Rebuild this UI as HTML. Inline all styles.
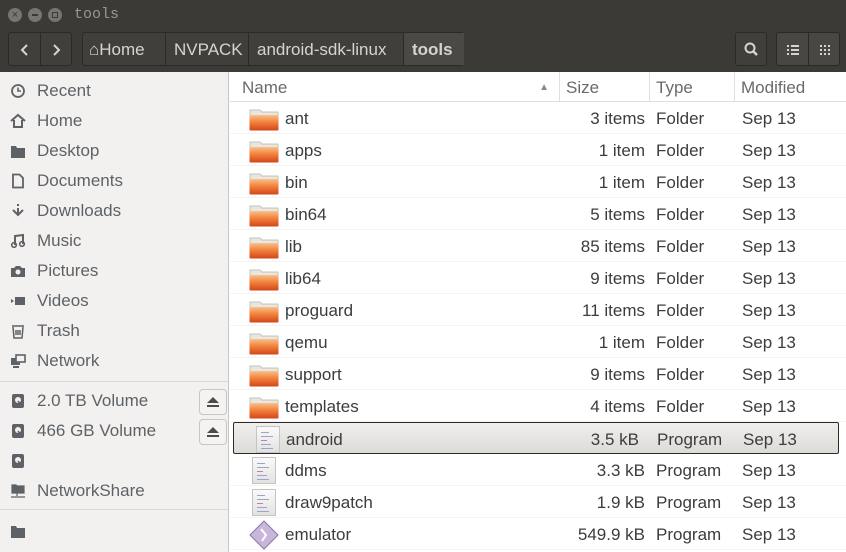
<!DOCTYPE html>
<html><head><style>
*{margin:0;padding:0;box-sizing:border-box}
body{width:846px;height:552px;overflow:hidden;font-family:"Liberation Sans",sans-serif;font-size:17px;position:relative;background:#fff}
.a{position:absolute}
#title{left:0;top:0;width:846px;height:30px;background:#3b3a36}
#tool{left:0;top:30px;width:846px;height:42px;background:#3b3a36}
.btn{position:absolute;border:1px solid #2b2a27;background:#403f3b;border-radius:3px;color:#d6d4cf}
#side{left:0;top:72px;width:229px;height:480px;background:#f2f1f0;border-right:1px solid #c8c6c2}
.si{position:absolute;left:37px;color:#5e6266;font-size:17px;line-height:20px}
.ic{position:absolute;left:10px;width:16px;height:16px}
#main{left:230px;top:72px;width:616px;height:480px;background:#fff}
.hd{position:absolute;top:0;height:30px;line-height:31px;color:#6a6a6a;border-right:1px solid #e0dfdc;border-bottom:1px solid #e0dfdc}
.row{position:absolute;left:0;width:616px;height:32px;border-bottom:1px solid #f5f4f2;color:#3c3c3c}
.row span{position:absolute;top:7px;line-height:20px}
.fold{position:absolute;left:19px;top:7px;width:30px;height:22px}
.doc{position:absolute;left:22px;top:3px;width:24px;height:27px;background:linear-gradient(#fafafa,#e2e2e2);border:1px solid #c4c4c4}
.doc i{position:absolute;left:4px;height:1px;background:#9aa5c8}
</style></head><body>
<div id="title" class="a">
 <div class="a" style="left:8px;top:8px;width:14px;height:14px;border-radius:50%;background:#77756f;color:#3b3a36;font-size:11px;line-height:14px;text-align:center">×</div>
 <div class="a" style="left:28px;top:8px;width:14px;height:14px;border-radius:50%;background:#77756f"><div class="a" style="left:4px;top:6px;width:6px;height:2px;background:#3b3a36"></div></div>
 <div class="a" style="left:48px;top:8px;width:14px;height:14px;border-radius:50%;background:#77756f"><div class="a" style="left:4px;top:4px;width:6px;height:6px;border:1px solid #3b3a36"></div></div>
 <div class="a" style="left:74px;top:6px;color:#9a978f;font-family:'Liberation Mono',monospace;font-size:15px">tools</div>
</div>
<div id="tool" class="a">
 <div class="btn" style="left:8px;top:2px;width:64px;height:34px"><div class="a" style="left:31px;top:0;width:1px;height:32px;background:#2b2a27"></div>
  <svg class="a" style="left:11px;top:10px" width="10" height="14"><path d="M7 2 L2 7 L7 12" stroke="#d6d4cf" stroke-width="2" fill="none"/></svg>
  <svg class="a" style="left:42px;top:10px" width="10" height="14"><path d="M3 2 L8 7 L3 12" stroke="#d6d4cf" stroke-width="2" fill="none"/></svg></div>
 <div class="btn" style="left:82px;top:2px;width:382px;height:34px;font-size:17px">
  <div class="a" style="left:6px;top:7px;line-height:20px">⌂Home</div>
  <div class="a" style="left:82px;top:0;width:1px;height:32px;background:#2b2a27"></div>
  <div class="a" style="left:91px;top:7px;line-height:20px">NVPACK</div>
  <div class="a" style="left:165px;top:0;width:1px;height:32px;background:#2b2a27"></div>
  <div class="a" style="left:174px;top:7px;line-height:20px">android-sdk-linux</div>
  <div class="a" style="left:320px;top:0;width:61px;height:32px;background:#4a4945;border-left:1px solid #2b2a27"></div>
  <div class="a" style="left:329px;top:7px;line-height:20px;font-weight:bold">tools</div>
 </div>
 <div class="btn" style="left:735px;top:2px;width:32px;height:34px">
  <svg class="a" style="left:7px;top:8px" width="18" height="18"><circle cx="7" cy="7" r="4.5" stroke="#d6d4cf" stroke-width="2" fill="none"/><path d="M10 10 L14 14" stroke="#d6d4cf" stroke-width="2.5"/></svg></div>
 <div class="btn" style="left:776px;top:2px;width:64px;height:34px;background:#484743"><div class="a" style="left:31px;top:0;width:1px;height:32px;background:#2b2a27"></div>
  <svg class="a" style="left:9px;top:10px" width="14" height="14"><g fill="#d6d4cf"><rect x="1" y="2" width="2" height="2"/><rect x="5" y="2" width="8" height="2"/><rect x="1" y="6" width="2" height="2"/><rect x="5" y="6" width="8" height="2"/><rect x="1" y="10" width="2" height="2"/><rect x="5" y="10" width="8" height="2"/></g></svg>
  <svg class="a" style="left:42px;top:10px" width="14" height="14"><g fill="#d6d4cf"><rect x="1" y="2" width="2" height="2"/><rect x="5" y="2" width="2" height="2"/><rect x="9" y="2" width="2" height="2"/><rect x="1" y="6" width="2" height="2"/><rect x="5" y="6" width="2" height="2"/><rect x="9" y="6" width="2" height="2"/><rect x="1" y="10" width="2" height="2"/><rect x="5" y="10" width="2" height="2"/><rect x="9" y="10" width="2" height="2"/></g></svg></div>
</div>
<div id="side" class="a">
 <svg class="ic" style="top:11px" viewBox="0 0 16 16"><circle cx="8" cy="8" r="6" stroke="#5e6266" stroke-width="1.8" fill="none"/><path d="M8 4.5 V8 H11" stroke="#5e6266" stroke-width="1.6" fill="none"/></svg><div class="si" style="top:9px">Recent</div>
 <svg class="ic" style="top:41px" viewBox="0 0 16 16"><path d="M1 8 L8 2 L15 8 M4 7 V14 H12 V7" stroke="#5e6266" stroke-width="2" fill="none"/></svg><div class="si" style="top:39px">Home</div>
 <svg class="ic" style="top:71px" viewBox="0 0 16 16"><path d="M1 3 H6 L7 5 H15 V15 H1Z" fill="#5e6266"/></svg><div class="si" style="top:69px">Desktop</div>
 <svg class="ic" style="top:101px" viewBox="0 0 16 16"><path d="M3 1.5 H9.5 L13 5 V14.5 H3Z" stroke="#5e6266" stroke-width="1.8" fill="none"/></svg><div class="si" style="top:99px">Documents</div>
 <svg class="ic" style="top:131px" viewBox="0 0 16 16"><path d="M8 1 V3 M8 5 V11 M3 7 L8 12 L13 7" stroke="#5e6266" stroke-width="2" fill="none"/></svg><div class="si" style="top:129px">Downloads</div>
 <svg class="ic" style="top:161px" viewBox="0 0 16 16"><path d="M5 12 V3 L13 2 V11" stroke="#5e6266" stroke-width="2" fill="none"/><circle cx="4" cy="12" r="2.3" stroke="#5e6266" stroke-width="1.6" fill="none"/><circle cx="12" cy="11" r="2.3" stroke="#5e6266" stroke-width="1.6" fill="none"/></svg><div class="si" style="top:159px">Music</div>
 <svg class="ic" style="top:191px" viewBox="0 0 16 16"><path d="M1 5 H4 L6 3 H10 L12 5 H15 V14 H1Z" fill="#5e6266"/><circle cx="8" cy="9" r="2.5" fill="#f2f1f0"/></svg><div class="si" style="top:189px">Pictures</div>
 <svg class="ic" style="top:221px" viewBox="0 0 16 16"><path d="M1 6 L4 8 L1 10Z M5 4 H15 V12 H5Z" fill="#5e6266"/></svg><div class="si" style="top:219px">Videos</div>
 <svg class="ic" style="top:251px" viewBox="0 0 16 16"><path d="M2 3 H14 M3 4 L4 15 H12 L13 4 M6 7 V12 M8 7 V12 M10 7 V12" stroke="#5e6266" stroke-width="1.5" fill="none"/></svg><div class="si" style="top:249px">Trash</div>
 <svg class="ic" style="top:281px" viewBox="0 0 16 16"><rect x="1" y="5" width="9" height="7" fill="#5e6266"/><rect x="6" y="2" width="9" height="7" stroke="#5e6266" stroke-width="1.6" fill="#f2f1f0"/><path d="M3 14 H9" stroke="#5e6266" stroke-width="2"/></svg><div class="si" style="top:279px">Network</div>
 <div class="a" style="left:0;top:309px;width:228px;height:1px;background:#dad8d5"></div>
 <svg class="ic" style="top:321px" viewBox="0 0 16 16"><rect x="2" y="1" width="12" height="14" rx="2" fill="#5e6266"/><circle cx="8" cy="7" r="3" fill="#f2f1f0"/><path d="M8 8 L11 12" stroke="#5e6266" stroke-width="1.5"/></svg><div class="si" style="top:319px">2.0 TB Volume</div>
 <div class="a" style="left:199px;top:317px;width:28px;height:26px;border:1px solid #c8c6c2;border-radius:4px;background:#f4f3f2"><svg class="a" style="left:6px;top:5px" width="14" height="14"><path d="M1 8 L7 2 L13 8Z M1 10 H13 V12 H1Z" fill="#4c4c4c"/></svg></div>
 <svg class="ic" style="top:351px" viewBox="0 0 16 16"><rect x="2" y="1" width="12" height="14" rx="2" fill="#5e6266"/><circle cx="8" cy="7" r="3" fill="#f2f1f0"/><path d="M8 8 L11 12" stroke="#5e6266" stroke-width="1.5"/></svg><div class="si" style="top:349px">466 GB Volume</div>
 <div class="a" style="left:199px;top:347px;width:28px;height:26px;border:1px solid #c8c6c2;border-radius:4px;background:#f4f3f2"><svg class="a" style="left:6px;top:5px" width="14" height="14"><path d="M1 8 L7 2 L13 8Z M1 10 H13 V12 H1Z" fill="#4c4c4c"/></svg></div>
 <svg class="ic" style="top:381px" viewBox="0 0 16 16"><rect x="2" y="1" width="12" height="14" rx="2" fill="#5e6266"/><circle cx="8" cy="7" r="3" fill="#f2f1f0"/><path d="M8 8 L11 12" stroke="#5e6266" stroke-width="1.5"/></svg>
 <svg class="ic" style="top:411px" viewBox="0 0 16 16"><path d="M2 2 H6 L7 3 H14 V10 H2Z M7 10 V13 M1 14 H15" fill="#5e6266" stroke="#5e6266" stroke-width="1.2"/></svg><div class="si" style="top:409px">NetworkShare</div>
 <div class="a" style="left:0;top:437px;width:228px;height:1px;background:#dad8d5"></div>
 <svg class="ic" style="top:451px" viewBox="0 0 16 16"><path d="M1 3 H6 L7 5 H15 V15 H1Z" fill="#5e6266"/></svg>
</div>
<div id="main" class="a">
 <div class="hd" style="left:0;width:330px;padding-left:12px">Name<span class="a" style="right:10px;top:0;font-size:10px;color:#888">▲</span></div>
 <div class="hd" style="left:330px;width:90px;padding-left:6px">Size</div>
 <div class="hd" style="left:420px;width:85px;padding-left:6px">Type</div>
 <div class="hd" style="left:505px;width:111px;padding-left:6px;border-right:none">Modified</div>
 <div id="rows"></div>
</div>
<script>
var d=[["ant","3 items","Folder"],["apps","1 item","Folder"],["bin","1 item","Folder"],["bin64","5 items","Folder"],["lib","85 items","Folder"],["lib64","9 items","Folder"],["proguard","11 items","Folder"],["qemu","1 item","Folder"],["support","9 items","Folder"],["templates","4 items","Folder"],["android","3.5 kB","Program"],["ddms","3.3 kB","Program"],["draw9patch","1.9 kB","Program"],["emulator","549.9 kB","Program"]];
var h="";
d.forEach(function(r,i){
 var top=30+i*32,ic;
 if(r[2]=="Folder")ic='<svg class="fold" viewBox="0 0 30 22"><defs><linearGradient id="g'+i+'" x1="0" y1="0" x2="0" y2="1"><stop offset="0" stop-color="#fbc08a"/><stop offset="0.45" stop-color="#f0843c"/><stop offset="1" stop-color="#d6441a"/></linearGradient></defs><path d="M1 1 H11 L13 3 H29 V8 H1Z" fill="#eae7e2" stroke="#b8b3ab" stroke-width="0.8"/><rect x="0.5" y="6" width="29" height="15.5" rx="1" fill="url(#g'+i+')"/></svg>';
 else if(r[0]=="emulator")ic='<svg class="fold" style="left:19px;top:2px;width:30px;height:30px" viewBox="0 0 30 30"><path d="M15 1 L29 15 L15 29 L1 15Z" fill="#c8b6dc" stroke="#8a7aa2"/><path d="M12 9 L17 15 L13 21" stroke="#fff" stroke-width="2" fill="none"/></svg>';
 else ic='<div class="doc"><i style="top:5px;width:8px"></i><i style="top:9px;width:12px"></i><i style="top:13px;width:6px;background:#d07aa0"></i><i style="top:17px;width:10px"></i><i style="top:21px;width:12px"></i></div>';
 var sel=r[0]=="android";
 h+='<div class="row" style="top:'+top+'px;'+(sel?'left:3px;width:606px;border:1.5px solid #2e2c20;border-radius:2px;background:linear-gradient(#f0efed,#dddbd8);':'')+'">'+(sel?ic.replace('left:22px','left:19px'):ic)+'<span style="left:'+(sel?52:55)+'px">'+r[0]+'</span><span style="right:'+(sel?-1+200:201)+'px;text-align:right">'+r[1]+'</span><span style="left:'+(sel?423:426)+'px">'+r[2]+'</span><span style="left:'+(sel?509:512)+'px">Sep 13</span></div>';
});
document.getElementById("rows").innerHTML=h;
</script>
</body></html>
